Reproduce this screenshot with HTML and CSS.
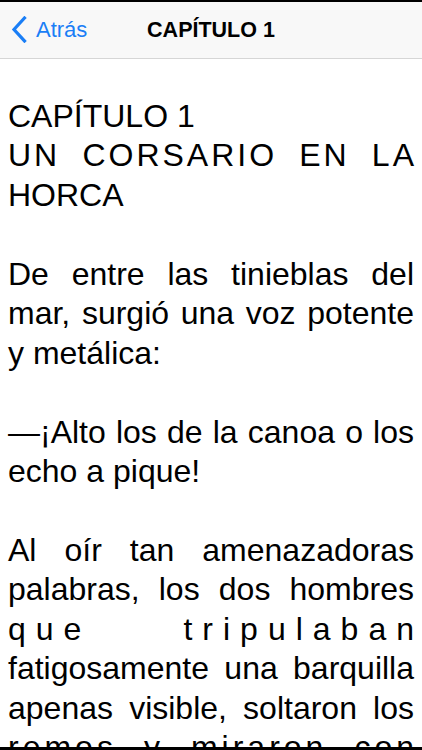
FILE: index.html
```html
<!DOCTYPE html>
<html lang="es">
<head>
<meta charset="utf-8">
<title>CAPÍTULO 1</title>
<link rel="stylesheet" href="styles.css">
</head>
<body>
<div class="screen">
  <header class="nav">
    <a class="back" href="#">
      <svg class="chev" width="16" height="27" viewBox="0 0 16 27"><path d="M13.5 2 L3 13.5 L13.5 25" fill="none" stroke="#1a7ef6" stroke-width="3.2" stroke-linecap="square"/></svg>
      <span>Atrás</span>
    </a>
    <h1 class="title">CAPÍTULO 1</h1>
  </header>
  <main class="content">
    <div class="para">
      <span class="ln left">CAPÍTULO 1</span>
      <span class="ln just ls3">UN CORSARIO EN L<span class="ls0">A</span></span>
      <span class="ln left">HORCA</span>
    </div>
    <div class="para">
      <span class="ln just">De entre las tinieblas del</span>
      <span class="ln just">mar, surgió una voz potente</span>
      <span class="ln left">y metálica:</span>
    </div>
    <div class="para">
      <span class="ln just">—¡Alto los de la canoa o los</span>
      <span class="ln left">echo a pique!</span>
    </div>
    <div class="para">
      <span class="ln just">Al oír tan amenazadoras</span>
      <span class="ln just">palabras, los dos hombres</span>
      <span class="ln just ls10">que tripulaba<span class="ls0">n</span></span>
      <span class="ln just">fatigosamente una barquilla</span>
      <span class="ln just">apenas visible, soltaron los</span>
      <span class="ln just ls4">remos y miraron co<span class="ls0">n</span></span>
    </div>
  </main>
  <div class="bottom-edge"></div>
</div>
</body>
</html>
```

FILE: styles.css
```css
html, body {
  margin: 0;
  padding: 0;
  background: #000;
}
body {
  width: 422px;
  height: 750px;
  overflow: hidden;
  font-family: "Liberation Sans", Arial, Helvetica, sans-serif;
}
.screen {
  position: relative;
  width: 422px;
  height: 748px;
  margin-top: 2px;
  background: #fff;
  overflow: hidden;
}
.nav {
  position: relative;
  height: 56px;
  background: #f8f8f8;
  border-bottom: 1px solid #d6d6d6;
  display: flex;
  align-items: center;
  justify-content: center;
}
.back {
  position: absolute;
  left: 11px;
  top: 14px;
  display: flex;
  align-items: center;
  gap: 9px;
  color: #1a7ef6;
  text-decoration: none;
  font-size: 22px;
  line-height: 27px;
}
.chev {
  display: block;
}
.title {
  margin: 0;
  font-size: 21.5px;
  font-weight: bold;
  color: #000;
  line-height: 27px;
  padding-top: 1px;
}
.content {
  padding: 38px 8px 0 8px;
  font-size: 32px;
  line-height: 39.45px;
  color: #000;
}
.para {
  margin-bottom: 39.45px;
}
.ln {
  display: block;
  white-space: nowrap;
}
.left {
  text-align: left;
}
.just {
  text-align: justify;
  text-align-last: justify;
}
.ls3 {
  letter-spacing: 3px;
}
.ls4 {
  letter-spacing: 4px;
}
.ls10 {
  letter-spacing: 10px;
}
.ls0 {
  letter-spacing: 0;
}
.bottom-edge {
  position: absolute;
  left: 0;
  right: 0;
  bottom: 0;
  height: 3px;
  background: #000;
}
```
